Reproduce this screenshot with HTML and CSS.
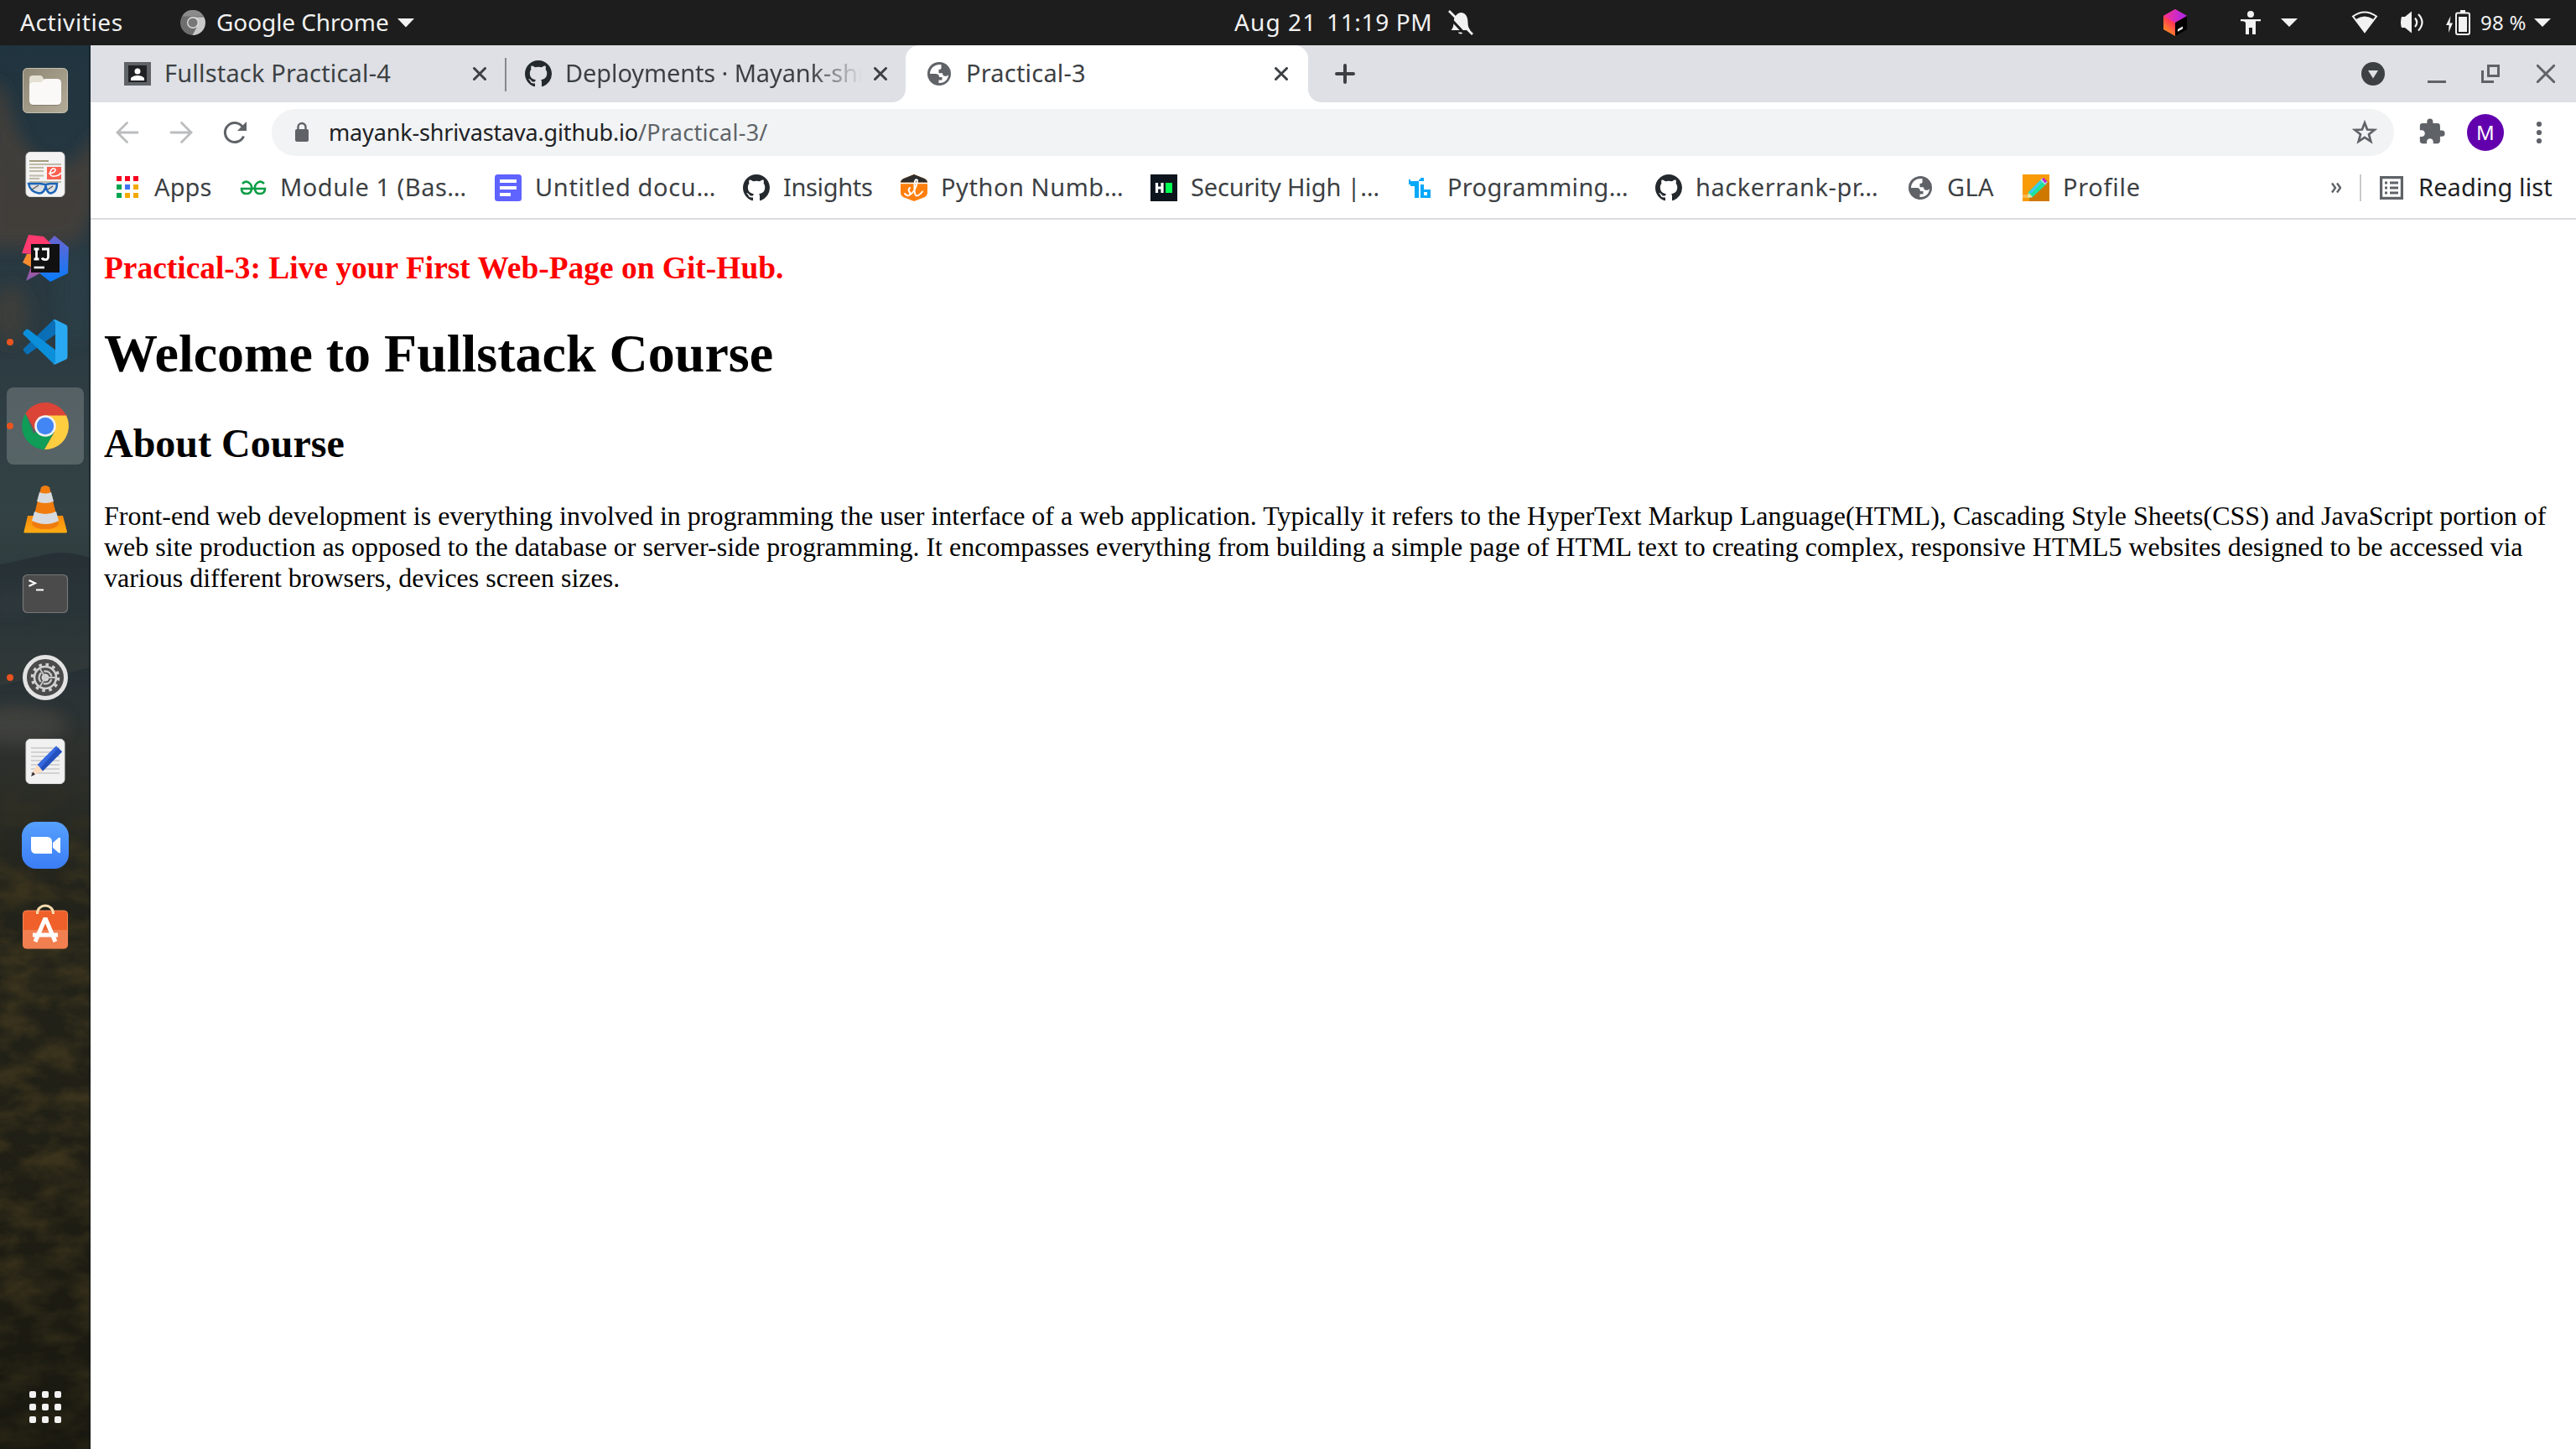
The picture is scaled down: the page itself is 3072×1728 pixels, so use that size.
FILE: index.html
```html
<!DOCTYPE html>
<html lang="en">
<head>
<meta charset="utf-8">
<title>Practical-3</title>
<link rel="stylesheet" href="styles.css">
</head>
<body>
<svg class="defs" width="0" height="0" aria-hidden="true">
  <symbol id="github" viewBox="0 0 16 16"><path fill="#24292e" d="M8 0C3.58 0 0 3.58 0 8c0 3.54 2.29 6.53 5.47 7.59.4.07.55-.17.55-.38 0-.19-.01-.82-.01-1.49-2.01.37-2.53-.49-2.69-.94-.09-.23-.48-.94-.82-1.13-.28-.15-.68-.52-.01-.53.63-.01 1.08.58 1.23.82.72 1.21 1.87.87 2.33.66.07-.52.28-.87.51-1.07-1.78-.2-3.64-.89-3.64-3.95 0-.87.31-1.59.82-2.15-.08-.2-.36-1.02.08-2.12 0 0 .67-.21 2.2.82.64-.18 1.32-.27 2-.27.68 0 1.36.09 2 .27 1.53-1.04 2.2-.82 2.2-.82.44 1.1.16 1.92.08 2.12.51.56.82 1.27.82 2.15 0 3.07-1.87 3.75-3.65 3.95.29.25.54.73.54 1.48 0 1.07-.01 1.93-.01 2.2 0 .21.15.46.55.38A8.01 8.01 0 0 0 16 8c0-4.42-3.58-8-8-8Z"/></symbol>
  <symbol id="globe" viewBox="0 0 32 32"><circle cx="16" cy="16" r="14" fill="#5f6368"/><path fill="#fff" d="M18.500 5C10.500 4 5 9.500 5 16h6.500c3 0 4.500 1.500 4.500 4h3.500v3.500h-4v3.500C22.500 27.500 27 22.500 27 17c-1.200 1.700-2.600 2-4.200 1.800-2-.2-2.600-1.500-2.800-3.600h-4.500v-4.200c2.400 0 3.500-.8 3-3.200z"/></symbol>
  <symbol id="close" viewBox="0 0 16 16"><path d="M1.500 1.500l13 13M14.500 1.500l-13 13" stroke="#3c4043" stroke-width="3" stroke-linecap="round"/></symbol>
</svg>

<header class="topbar">
  <span class="lbl activities">Activities</span>
  <svg class="app-icon" width="30" height="30" viewBox="0 0 30 30"><circle cx="15" cy="15" r="15" fill="#6e6e6e"/><path d="M2 7.500A15 15 0 0 1 28 7.500H15z" fill="#8b8b8b"/><path d="M15 8.500h13.400A15 15 0 0 1 14.500 30l6.200-11.500z" fill="#c9c9c9"/><circle cx="15" cy="15" r="7" fill="#e0e0e0"/><circle cx="15" cy="15" r="5.600" fill="#777"/></svg>
  <span class="lbl app-name">Google Chrome</span>
  <svg width="20" height="11" viewBox="0 0 20 11"><path d="M0 0h20L10 10.500z" fill="#f2f2f2"/></svg>
  <div class="clock">
    <span class="lbl date">Aug 21</span><span class="lbl time">11:19 PM</span>
    <svg width="30" height="30" viewBox="0 0 30 30"><path d="M3.500 24c2-2 3-5 3-9 0-6 3-11 8.500-12 6 0 8.500 5 8.500 12 0 4 1 7 3 9z" fill="#f2f2f2"/><path d="M12 26.500h6c-.5 2.500-5.500 2.500-6 0z" fill="#f2f2f2"/><path d="M-1 1.500l29 31" stroke="#1d1d1d" stroke-width="3" transform="translate(-2.500 2)"/><path d="M1 1l28 28" stroke="#f2f2f2" stroke-width="2.600"/></svg>
  </div>
  <div class="tray">
    <svg width="28" height="32" viewBox="0 0 28 32"><defs><linearGradient id="cubeL" x1=".2" y1="1" x2=".8" y2=".2"><stop offset="0" stop-color="#ff9a1a"/><stop offset=".5" stop-color="#ff3a55"/><stop offset="1" stop-color="#ff2d7c"/></linearGradient><linearGradient id="cubeT" x1="0" x2="1"><stop offset="0" stop-color="#ff318c"/><stop offset="1" stop-color="#a626f5"/></linearGradient></defs><path d="M14 0l14 8v7L14 32 0 24V8z" fill="url(#cubeL)"/><path d="M14 0l14 8-14 8L0 8z" fill="url(#cubeT)"/><path d="M28 8v16l-14 8V16z" fill="#000"/><path d="M17 24l6-3.500v2.700l-6 3.500z" fill="#fff"/></svg>
    <svg class="t-person" width="24" height="28" viewBox="0 0 24 28" fill="#f2f2f2"><circle cx="12" cy="4" r="4"/><path d="M0 10h24v2.200h-6V28h-4v-8h-4v8H6V15c0-2-1-2.800-6-2.800z"/></svg>
    <svg class="t-tri" width="20" height="10" viewBox="0 0 20 10"><path d="M0 0h20L10 10z" fill="#f2f2f2"/></svg>
    <svg class="t-wifi" width="32" height="28" viewBox="0 0 32 28"><path d="M2 6.500Q16-3.500 30 6.500L16 25z" fill="none" stroke="#f2f2f2" stroke-width="2"/><path d="M5.500 10Q16 3 26.500 10L16 26z" fill="#f2f2f2"/></svg>
    <svg class="t-vol" width="29" height="28" viewBox="0 0 29 28"><path d="M2 7h4l8-6.500v26L6 20H2q-2-6 0-13z" fill="#f2f2f2"/><path d="M18 8.500q4.500 5 0 10.500M22 4q9 9.500 0 19.500" fill="none" stroke="#f2f2f2" stroke-width="2.200"/></svg>
    <svg class="t-bat" width="29" height="30" viewBox="0 0 29 30"><path d="M5.500 7L0 18h3.500L3 27l5-11.500H4.500z" fill="#f2f2f2"/><rect x="12" y="3.500" width="16" height="25.500" rx="2" fill="none" stroke="#f2f2f2" stroke-width="2"/><path d="M17 0h6v3h-6zM15 8h10v18H15z" fill="#f2f2f2"/></svg>
    <span class="lbl pct">98 %</span>
    <svg width="20" height="10" viewBox="0 0 20 10"><path d="M0 0h20L10 10z" fill="#f2f2f2"/></svg>
  </div>
</header>

<div class="desktop">
<nav class="dock">
  <svg class="wallpaper" width="108" height="1674" viewBox="0 54 108 1674" preserveAspectRatio="none">
    <defs>
      <linearGradient id="sky" x1="0" y1="0" x2="0" y2="1"><stop offset="0" stop-color="#20343f"/><stop offset=".1" stop-color="#273841"/><stop offset=".2" stop-color="#2b3a41"/><stop offset=".33" stop-color="#334244"/><stop offset=".4" stop-color="#2c383b"/><stop offset=".46" stop-color="#323736"/><stop offset=".52" stop-color="#2b2e2a"/><stop offset=".6" stop-color="#22231b"/><stop offset=".8" stop-color="#201f15"/><stop offset="1" stop-color="#181810"/></linearGradient>
      <filter id="soft" x="-50%" y="-50%" width="200%" height="200%"><feGaussianBlur stdDeviation="9"/></filter>
      <filter id="leaves" x="0" y="0" width="100%" height="100%" color-interpolation-filters="sRGB"><feTurbulence type="fractalNoise" baseFrequency=".022 .04" numOctaves="5" seed="8"/><feColorMatrix values="0 0 0 0 .27  0 0 0 0 .23  0 0 0 0 .12  2.200 0 0 0 -.75"/></filter>
      <linearGradient id="fade" x1="0" y1="0" x2="0" y2="1"><stop offset="0" stop-color="#000"/><stop offset=".22" stop-color="#bbb"/><stop offset=".6" stop-color="#bbb"/><stop offset="1" stop-color="#555"/></linearGradient>
      <linearGradient id="ridge" x1="0" y1="0" x2="0" y2="1"><stop offset="0" stop-color="#263035"/><stop offset="1" stop-color="#263035" stop-opacity="0"/></linearGradient>
      <mask id="trees"><rect x="0" y="900" width="108" height="828" fill="url(#fade)"/></mask>
    </defs>
    <rect y="54" width="108" height="1674" fill="url(#sky)"/>
    <g filter="url(#soft)"><path d="M-10 95l14 10 18 55 26 35 40 0 30-40v80l-20 50-50 10-68 0z" fill="#45403b" opacity=".85"/><ellipse cx="12" cy="375" rx="22" ry="34" fill="#453f38" opacity=".7"/><ellipse cx="90" cy="350" rx="20" ry="60" fill="#2a434b" opacity=".5"/><ellipse cx="14" cy="715" rx="26" ry="14" fill="#3b474a" opacity=".7"/></g>
    <path d="M0 673Q35 666 55 661Q85 656 108 666V780H0z" fill="url(#ridge)"/>
    <path d="M0 818l30-8 25-2 53-12v90H0z" fill="url(#ridge)"/>
    <ellipse cx="20" cy="865" rx="60" ry="22" fill="#44443f" opacity=".8" filter="url(#soft)"/>
    <g mask="url(#trees)"><rect y="900" width="108" height="828" filter="url(#leaves)"/></g>
    <path d="M107 54v1674" stroke="#10181b" stroke-opacity=".5" stroke-width="2"/>
  </svg>

  <div class="slot"><svg width="56" height="56" viewBox="0 0 56 56"><defs><linearGradient id="fl" x2="1" y2="1"><stop offset="0" stop-color="#8f8875"/><stop offset="1" stop-color="#b3ab98"/></linearGradient></defs><rect x="1.500" y="1.500" width="53" height="53" rx="5" fill="url(#fl)" stroke="#c5bfae"/><rect x="9" y="14" width="38" height="32" rx="5" fill="#857d6b"/><path d="M9 21V14q0-4 4-4h9q2 0 3 2l2 4-3 2H12q-3 0-3 3z" fill="#e4e0d2"/><path d="M9 21q0-3 3-3h10q2 0 3-2 1-2 3-2h14q5 0 5 5v21q0 5-5 5H14q-5 0-5-5z" fill="#faf9f7"/></svg></div>

  <div class="slot"><svg width="56" height="56" viewBox="0 0 56 56"><rect x="5" y="1.500" width="46" height="53" rx="5" fill="#f3f3f3" stroke="#dcdcdc"/><path d="M9 16h38M9 20h17M9 24h17M9 29.500h17M9 33h12M9 37h38" stroke="#c0bba8" stroke-width="2"/><path d="M9 12h23" stroke="#a49c80" stroke-width="2"/><path d="M30 19h17v15H30z" fill="#fa5f50"/><path d="M32 27q9-1 8-5-4-3-6 3-1 6 5 5 5 0 8-4" fill="none" stroke="#fff" stroke-width="1.600"/><path d="M8 39h14l6 1 6-1h8q0 10-7 11.500-5.500 0-6.500-9.500-1 9.500-8 9.500Q10 49 8 39z" fill="#dcdfe3" stroke="#1c64b7" stroke-width="2.400"/><path d="M12 46l8-5M31 46l6-4" stroke="#555" stroke-width="1.200"/></svg></div>

  <div class="slot"><svg width="56" height="56" viewBox="0 0 56 56"><defs><linearGradient id="ijb" x2="0" y2="1"><stop offset="0" stop-color="#6b63d0"/><stop offset="1" stop-color="#087cfa"/></linearGradient><linearGradient id="ijp" x2="0" y2="1"><stop offset=".3" stop-color="#fe3a6e"/><stop offset="1" stop-color="#8260b5"/></linearGradient></defs><path d="M39 1l17 14-1 31-21 10-19-15 13-29z" fill="url(#ijb)"/><path d="M8 0l18 2 12 12-6 26L5 55l7-20-1-12-11-1z" fill="url(#ijp)"/><path d="M6 23h6v16L1 33z" fill="#f68b30"/><path d="M11 11h34v34H11z" fill="#111"/><path d="M14.500 39h12.500" stroke="#fff" stroke-width="2.600"/><path d="M14.500 17h6M17.500 17v12M14.500 29h6M24 17h7.500v9q0 4-4 3.500-2.500 0-3.500-2" stroke="#fff" stroke-width="2.800" fill="none"/></svg></div>

  <div class="slot running"><svg width="56" height="56" viewBox="0 0 56 56"><path d="M2 38q-1-1 0-2L37 2q2-1 4 0v16L8 42q-2 1-3 0z" fill="#0a6fb6"/><path d="M2 16q-1 2 0 3l35 34q2 1 4 0V38L8 13q-1-1-3 0z" fill="#0b8fdb"/><path d="M37 1.500q2-1 4 0l12 6q1.500 1 1.500 3v35q0 2-1.500 3l-12 5.500q-2 1-4 0 3-1 3-4V6q0-3-3-4.500z" fill="#29a9f1"/></svg></div>

  <div class="slot running active"><svg width="56" height="56" viewBox="0 0 56 56"><path d="M28 28L3.750 14A28 28 0 0 1 52.250 14L54 16z" fill="#db4437"/><path d="M28 28L14 37 4.500 13A28 28 0 0 0 27 56l11-20z" fill="#0f9d58"/><path d="M4.500 13L15 33l13-17z" fill="#db4437"/><path d="M28 15.500h25A28 28 0 0 1 27 56l12-21z" fill="#ffcd40"/><circle cx="28" cy="28" r="12.800" fill="#f1f1f1"/><circle cx="28" cy="28" r="10.200" fill="#4285f4"/></svg></div>

  <div class="slot"><svg width="56" height="58" viewBox="0 0 56 58"><defs><linearGradient id="vb" x2="0" y2="1"><stop offset="0" stop-color="#f78a0c"/><stop offset="1" stop-color="#ffac12"/></linearGradient></defs><path d="M7 36h42l5 19q0 1.500-2 1.500H4q-2 0-1.500-1.500z" fill="url(#vb)"/><path d="M23 2q5-4 10 0l11 44q-3 6-16 6t-16-6z" fill="#f07c0e"/><path d="M21 8q7 3 14 0l3 11q-10 4-20 0z" fill="#d7dbdf"/><path d="M15 31q13 6 26 0l3 11q-15 8-32 0z" fill="#d7dbdf"/></svg></div>

  <div class="slot"><svg width="56" height="56" viewBox="0 0 56 56"><rect x="1.500" y="5.500" width="53" height="45" rx="5" fill="#4b4b4b" stroke="#777" stroke-width="1.200"/><path d="M8.500 12l7.500 3.500-7.500 3.500" fill="none" stroke="#fff" stroke-width="2"/><path d="M17 23.500h9" stroke="#fff" stroke-width="2"/></svg></div>

  <div class="slot running"><svg width="56" height="56" viewBox="0 0 56 56"><circle cx="28" cy="28" r="24.500" fill="#4b4b4b" stroke="#e3e3e3" stroke-width="5"/><circle cx="28" cy="28" r="13" fill="none" stroke="#d0d0d0" stroke-width="2.600"/><circle cx="28" cy="28" r="15.500" fill="none" stroke="#d0d0d0" stroke-width="3.600" stroke-dasharray="3.600 4.516"/><circle cx="28" cy="28" r="7.500" fill="none" stroke="#c8c8c8" stroke-width="2.400" stroke-dasharray="12 3.700" stroke-dashoffset="-2"/><circle cx="28" cy="28" r="4.500" fill="#d6d6d6"/><path d="M28 28h12M28 28l-6.500-11M28 28l-6.500 11" stroke="#c8c8c8" stroke-width="1.800"/></svg></div>

  <div class="slot"><svg width="56" height="56" viewBox="0 0 56 56"><rect x="5" y="1.500" width="46" height="53" rx="5" fill="#f1f1f1" stroke="#dadada"/><path d="M11 12h34M11 17h34M11 22h34M11 27h34M11 32h34M11 37h34M11 42h34" stroke="#c8c8c8" stroke-width="1.300"/><path d="M41 9.500l7 7L25 39.500 18.500 32z" fill="#3567df"/><path d="M43.500 12l4.500 4.500L25 39.500l-3-3.500z" fill="#2450bd"/><path d="M18.500 32l6.500 7.500-9 4-3-3z" fill="#fcdcc0"/><path d="M13 40.500l3 3-5 2.500z" fill="#333"/></svg></div>

  <div class="slot"><svg width="56" height="56" viewBox="0 0 56 56"><defs><linearGradient id="zm" x2="0" y2="1"><stop offset="0" stop-color="#56a0fd"/><stop offset="1" stop-color="#3b7df6"/></linearGradient></defs><rect width="56" height="56" rx="17" fill="url(#zm)"/><path d="M11 18h19q6 0 6 6v14H17q-6 0-6-6z" fill="#fff"/><path d="M37 25l7-6q2-1 2 1v16q0 2-2 1l-7-6z" fill="#fff"/></svg></div>

  <div class="slot software"><svg width="56" height="60" viewBox="0 0 56 60"><rect x="1.500" y="9" width="53" height="45" rx="4" fill="#f0602a" stroke="#f58358"/><path d="M2 32h52v18q0 4-4 4H6q-4 0-4-4z" fill="#f27f50"/><path d="M18.500 13V12a9.500 9 0 0 1 19 0v1" fill="none" stroke="#fbdcae" stroke-width="3"/><path d="M16 46l12-28 12 28M13 38h30" fill="none" stroke="#fff" stroke-width="5" stroke-linejoin="bevel"/></svg></div>

  <div class="slot apps-button"><svg width="38" height="38" viewBox="0 0 38 38" fill="#f2f2f2"><g id="gr"><rect width="8" height="8" rx="2"/><rect x="15" width="8" height="8" rx="2"/><rect x="30" width="8" height="8" rx="2"/></g><use href="#gr" y="15"/><use href="#gr" y="30"/></svg></div>
</nav>

<main class="window">
  <div class="tabstrip">
    <div class="tab first">
      <svg width="32" height="28" viewBox="0 0 32 28"><path d="M0 0h32v28H0z" fill="#5f6368"/><path d="M5 4h22v20H5z" fill="#202124"/><circle cx="16" cy="11" r="3.500" fill="#fff"/><path d="M8 22v-3q3-3 8-3t8 3v3z" fill="#fff"/></svg>
      <span class="lbl title t1">Fullstack Practical-4</span>
      <svg width="16" height="16"><use href="#close"/></svg>
    </div>
    <div class="tab second">
      <svg width="32" height="32"><use href="#github"/></svg>
      <span class="lbl title t2">Deployments · Mayank-shr</span>
      <svg width="16" height="16"><use href="#close"/></svg>
    </div>
    <div class="tab current">
      <svg width="32" height="32"><use href="#globe"/></svg>
      <span class="lbl title t3">Practical-3</span>
      <svg width="16" height="16"><use href="#close"/></svg>
    </div>
    <svg class="plus" width="24" height="24" viewBox="0 0 24 24"><path d="M12 2v20M2 12h20" stroke="#3c4043" stroke-width="4" stroke-linecap="round"/></svg>
    <div class="controls">
      <svg width="28" height="28" viewBox="0 0 28 28"><circle cx="14" cy="14" r="14" fill="#3c4043"/><path d="M8 10h12l-6 9.500z" fill="#dee0e5"/></svg>
      <svg class="c-min" width="22" height="22" viewBox="0 0 22 22"><path d="M0 20.500h22" stroke="#5f6368" stroke-width="3"/></svg>
      <svg class="c-max" width="22" height="22" viewBox="0 0 22 22"><path d="M8.500 1.500h12v12h-12zM1.500 7v13.500H15" fill="none" stroke="#5f6368" stroke-width="3"/></svg>
      <svg class="c-close" width="22" height="22" viewBox="0 0 22 22"><path d="M1.200 1.200l19.600 19.600M20.800 1.200L1.200 20.800" stroke="#5f6368" stroke-width="3" stroke-linecap="round"/></svg>
    </div>
  </div>

  <div class="toolbar">
    <svg width="32" height="32" viewBox="0 0 32 32" fill="none" stroke="#babcbe" stroke-width="2.800" stroke-linecap="round"><path d="M28 16H5M15.500 4.500L4 16l11.500 11.500"/></svg>
    <svg class="fwd" width="32" height="32" viewBox="0 0 32 32" fill="none" stroke="#babcbe" stroke-width="2.800" stroke-linecap="round"><path d="M4 16h23M16.500 4.500L28 16 16.500 27.500"/></svg>
    <svg class="reload" width="32" height="32" viewBox="0 0 32 32"><path d="M26.500 20.500A11.500 11.500 0 1 1 25 9" fill="none" stroke="#5f6368" stroke-width="3"/><path d="M30 3v11H19z" fill="#5f6368"/></svg>
    <div class="omnibox">
      <svg width="32" height="32" viewBox="0 0 32 32"><path d="M8 14q0-2 2-2h12q2 0 2 2v11q0 2-2 2H10q-2 0-2-2z" fill="#5f6368"/><path d="M11.500 13v-3.500a4.500 4.500 0 0 1 9 0V13" fill="none" stroke="#5f6368" stroke-width="2.400"/></svg>
      <span class="lbl host">mayank-shrivastava.github.io</span><span class="lbl path">/Practical-3/</span>
      <svg class="star" width="32" height="32" viewBox="0 0 32 32"><path d="M16 4.500l3.100 8 8.600.4-6.700 5.400 2.300 8.300L16 21.900l-7.300 4.700 2.300-8.300-6.700-5.400 8.600-.4z" fill="none" stroke="#5f6368" stroke-width="2.700"/></svg>
    </div>
    <svg class="ext" width="34" height="34" viewBox="0 0 24 24"><path fill="#5f6368" d="M20.500 11H19V7c0-1.100-.9-2-2-2h-4V3.500a2.500 2.500 0 0 0-5 0V5H4c-1.100 0-1.990.9-1.990 2v3.800H3.500c1.490 0 2.700 1.210 2.700 2.700s-1.210 2.700-2.700 2.700H2V20c0 1.100.9 2 2 2h3.800v-1.500c0-1.490 1.210-2.700 2.700-2.700s2.700 1.210 2.700 2.700V22H17c1.100 0 2-.9 2-2v-4h1.500a2.500 2.500 0 0 0 0-5z"/></svg>
    <span class="avatar">M</span>
    <svg class="menu" width="32" height="32" viewBox="0 0 32 32" fill="#5f6368"><circle cx="16" cy="6" r="3.100"/><circle cx="16" cy="16" r="3.100"/><circle cx="16" cy="26" r="3.100"/></svg>
  </div>

  <div class="bookmarks">
    <div class="bm b-apps"><svg width="32" height="32" viewBox="0 0 32 32"><path d="M3 2h6v6H3zM13 2h6v6h-6zM23 2h6v6h-6z" fill="#f8001f"/><path d="M3 12h6v6H3zM3 22h6v6H3z" fill="#00a550"/><path d="M13 12h6v6h-6z" fill="#3f73f4"/><path d="M23 12h6v6h-6zM13 22h6v6h-6zM23 22h6v6h-6z" fill="#f4a900"/></svg><span class="lbl">Apps</span></div>
    <div class="bm b-module"><svg width="32" height="32" viewBox="0 0 32 32" fill="none" stroke="#0b9d45" stroke-width="2.600"><path d="M3 11q4-4 8-1 4 3 3 8-1 5-6 5-6 0-6-6h28q0 6-6 6-5 0-6-5-1-5 3-8 4-3 8 1"/></svg><span class="lbl">Module 1 (Bas…</span></div>
    <div class="bm b-doc"><svg width="32" height="32" viewBox="0 0 32 32"><rect width="32" height="32" rx="3.500" fill="#5f63ff"/><path d="M6 8h20M6 16h20M6 24h13" stroke="#fff" stroke-width="4"/></svg><span class="lbl">Untitled docu…</span></div>
    <div class="bm b-insights"><svg width="32" height="32"><use href="#github"/></svg><span class="lbl">Insights</span></div>
    <div class="bm b-python"><svg width="32" height="32" viewBox="0 0 32 32"><path d="M16 0l12.500 5Q32 7 32 10v12q0 3-3 5l-13 5L3 27q-3-2-3-5V10q0-3 3.500-5z" fill="#ff7f0e"/><path d="M16 0l12.500 5Q32 7 32 9.500H0Q0 7 3.500 5z" fill="#2d2d2d"/><path d="M0 10.500h32" stroke="#fff" stroke-width="1.400"/><path d="M5 23q4 4 6 1 1-2-1-4-1-2 1-4M10 25q9-5 10-18-3-3-3.500 5-.5 13 2.500 13.500 3 0 7-5" fill="none" stroke="#fff" stroke-width="2" stroke-linecap="round"/></svg><span class="lbl">Python Numb…</span></div>
    <div class="bm b-security"><svg width="32" height="32" viewBox="0 0 32 32"><path d="M0 0h32v32H0z" fill="#0e141e"/><path d="M7.500 10v12M14 10v12M7 16h7" stroke="#fff" stroke-width="3.200"/><path d="M18 10h8v12h-8z" fill="#00ff52"/></svg><span class="lbl">Security High |…</span></div>
    <div class="bm b-prog"><svg width="32" height="32" viewBox="0 0 32 32" fill="#06a8f8"><path d="M2 6h2v2h10V6h2V4h4v4h-6v20h-5V14H4v-2H2z"/><path d="M16 12h4v6h8v10H16zM20 21v4h4v-4z" fill-rule="evenodd"/></svg><span class="lbl">Programming…</span></div>
    <div class="bm b-hacker"><svg width="32" height="32"><use href="#github"/></svg><span class="lbl">hackerrank-pr…</span></div>
    <div class="bm b-gla"><svg width="32" height="32"><use href="#globe"/></svg><span class="lbl">GLA</span></div>
    <div class="bm b-profile"><svg width="32" height="32" viewBox="0 0 32 32"><path d="M0 0h32v32H0z" fill="#f99b06"/><path d="M28 6l4 4v22H8v-4z" fill="#cf7800"/><path d="M0 24h8v4H0z" fill="#ffb84d"/><path d="M22 6l6 6L12 27l-6 1 1-7z" fill="#1de2a0"/><path d="M20.500 8L8 21l2 2L22.500 10z" fill="#41c9f5"/><path d="M6 28l1-6 5 5z" fill="#f7dfa8"/><path d="M21 7l3-3 6 5-3 3.500z" fill="#a5dcee"/><path d="M23 5.500l2.500-1.500 3.500 4-2 2.500z" fill="#c71fc4"/></svg><span class="lbl">Profile</span></div>
    <div class="reading">
      <svg width="12" height="14" viewBox="0 0 12 14"><path d="M1 1.500l4 5.500-4 5.500M7 1.500L11 7l-4 5.500" fill="none" stroke="#5f6368" stroke-width="2.400"/></svg>
      <span class="divider"></span>
      <svg width="28" height="28" viewBox="0 0 28 28"><path d="M1.600 1.600h24.800v24.800H1.600z" fill="none" stroke="#5f6368" stroke-width="3.200"/><path d="M6 8h3M6 14h3M6 20h3M12 8h10M12 14h10M12 20h10" stroke="#5f6368" stroke-width="3"/></svg>
      <span class="lbl">Reading list</span>
    </div>
  </div>

  <article class="page">
    <h3>Practical-3: Live your First Web-Page on Git-Hub.</h3>
    <h1>Welcome to Fullstack Course</h1>
    <h2>About Course</h2>
    <p>Front-end web development is everything involved in programming the user interface of a web application. Typically it refers to the HyperText Markup Language(HTML), Cascading Style Sheets(CSS) and JavaScript portion of web site production as opposed to the database or server-side programming. It encompasses everything from building a simple page of HTML text to creating complex, responsive HTML5 websites designed to be accessed via various different browsers, devices screen sizes.</p>
  </article>
</main>
</div>
</body>
</html>
```

FILE: styles.css
```css
* { box-sizing: border-box; }
html, body { height: 100%; }
body {
  margin: 0;
  display: flex;
  flex-direction: column;
  overflow: hidden;
  background: #fff;
  font-family: "Noto Sans", "Open Sans", sans-serif;
}
svg { display: block; flex: none; }
.defs { position: absolute; }
.lbl { display: block; flex: none; white-space: pre; line-height: 40px; padding-bottom: 2px; }

/* system bar */
.topbar {
  flex: none;
  height: 54px;
  display: flex;
  align-items: center;
  padding: 0 30px 0 24px;
  background: #1d1d1d;
  color: #f2f2f2;
  font-size: 28px;
}
.activities { width: 191px; letter-spacing: .6px; }
.app-name { width: 216px; margin-left: 13px; letter-spacing: -.08px; }
.clock { display: flex; align-items: center; margin-left: 978px; }
.date { width: 110px; letter-spacing: 1.1px; }
.time { width: 145px; letter-spacing: .65px; }
.tray { display: flex; align-items: center; margin-left: auto; }
.t-person { margin-left: 64px; }
.t-tri { margin-left: 24px; }
.t-wifi { margin-left: 64px; }
.t-vol { margin-left: 26px; }
.t-bat { margin-left: 26px; margin-bottom: 1px; }
.pct { width: 64px; margin: 0 0 0 12px; font-size: 24px; letter-spacing: .3px; padding-bottom: 0; }

.desktop { flex: 1; display: flex; min-height: 0; }

/* launcher */
.dock {
  position: relative;
  flex: none;
  width: 108px;
  display: flex;
  flex-direction: column;
  padding-top: 4px;
}
.wallpaper { position: absolute; inset: 0; }
.slot {
  position: relative;
  flex: none;
  height: 100px;
  display: grid;
  place-items: center;
}
.slot.active::before {
  content: "";
  position: absolute;
  inset: 4px 8px;
  border-radius: 8px;
  background: rgba(255, 255, 255, .19);
}
.slot svg { position: relative; }
.slot.running::after {
  content: "";
  position: absolute;
  left: 8px;
  top: 46px;
  width: 8px;
  height: 8px;
  border-radius: 50%;
  background: #e95420;
}
.slot.software { padding-bottom: 3px; }
.apps-button { margin-top: auto; }

/* browser window */
.window { flex: 1; min-width: 0; display: flex; flex-direction: column; background: #fff; }
.tabstrip { height: 68px; flex: none; display: flex; background: #dee0e5; color: #3c4043; font-size: 29px; }
.tab { position: relative; display: flex; align-items: center; }
.title { flex: 1; margin-left: 16px; }
.t1 { letter-spacing: .18px; }
.t2 {
  letter-spacing: -.11px;
  -webkit-mask-image: linear-gradient(to right, #000 294px, transparent 354px);
  mask-image: linear-gradient(to right, #000 294px, transparent 354px);
}
.t3 { letter-spacing: .2px; }
.tab.first { width: 496px; padding: 0 24px 0 40px; }
.tab.first::after {
  content: "";
  position: absolute;
  right: 0;
  top: 15px;
  width: 2px;
  height: 40px;
  background: #85878b;
}
.tab.second { width: 476px; padding: 0 22px; }
.tab.current { width: 480px; padding: 0 24px; background: #fff; border-radius: 16px 16px 0 0; }
.tab.current::before, .tab.current::after {
  content: "";
  position: absolute;
  bottom: 0;
  width: 16px;
  height: 16px;
}
.tab.current::before { left: -16px; background: radial-gradient(circle at 0 0, transparent 15.5px, #fff 16.5px); }
.tab.current::after { right: -16px; background: radial-gradient(circle at 100% 0, transparent 15.5px, #fff 16.5px); }
.plus { margin: 22px 0 0 32px; }
.controls { display: flex; align-items: center; margin-left: auto; padding-right: 25px; }
.c-min { margin-left: 51px; }
.c-max { margin-left: 42px; }
.c-close { margin-left: 44px; }

.toolbar { height: 72px; flex: none; display: flex; align-items: center; padding: 0 28px; }
.fwd, .reload { margin-left: 32px; }
.omnibox {
  flex: 1;
  height: 56px;
  margin-left: 28px;
  padding: 0 19px 0 20px;
  display: flex;
  align-items: center;
  border-radius: 28px;
  background: #f1f3f4;
  font-size: 27px;
}
.omnibox .lbl { padding-bottom: 0; }
.host { margin-left: 16px; color: #202124; letter-spacing: -.16px; }
.path { color: #5f6368; letter-spacing: .28px; }
.star { margin-left: auto; }
.ext { margin-left: 28px; margin-bottom: 3px; }
.avatar {
  width: 44px;
  height: 44px;
  margin-left: 25px;
  border-radius: 50%;
  background: #6200ae;
  color: #fff;
  font-size: 24px;
  line-height: 43px;
  text-align: center;
}
.menu { margin-left: 26px; }

.bookmarks {
  height: 68px;
  flex: none;
  display: flex;
  align-items: center;
  padding: 0 0 6px 28px;
  border-bottom: 2px solid #dadce0;
  color: #3c4043;
  font-size: 29px;
}
.bm { display: flex; align-items: center; gap: 16px; flex: none; }
.b-apps { width: 150px; letter-spacing: .1px; }
.b-module { width: 304px; letter-spacing: .5px; }
.b-doc { width: 296px; letter-spacing: .65px; }
.b-insights { width: 188px; letter-spacing: -.34px; }
.b-python { width: 298px; letter-spacing: .55px; }
.b-security { width: 306px; letter-spacing: -.15px; }
.b-prog { width: 296px; letter-spacing: .3px; }
.b-hacker { width: 300px; letter-spacing: .55px; }
.b-gla { width: 138px; letter-spacing: .35px; }
.b-profile { width: 140px; letter-spacing: .7px; }
.reading { display: flex; align-items: center; width: 292px; margin-left: auto; color: #202124; letter-spacing: .1px; }
.divider { width: 2px; height: 32px; margin: 0 22px; background: #c8cacd; }
.reading .lbl { margin-left: 18px; }

/* document */
.page {
  flex: 1;
  padding: 0 16px;
  overflow: hidden;
  color: #000;
  font-family: "Liberation Serif", "Times New Roman", serif;
  font-size: 32px;
}
.page h3 { margin: 36px 0; font-size: 37.44px; color: #f00; }
.page h1 { margin: 44.3px 0 42px; font-size: 64px; }
.page h2 { margin: 39px 0 40.8px; font-size: 48px; }
.page p { margin: 32px 0; }
```
